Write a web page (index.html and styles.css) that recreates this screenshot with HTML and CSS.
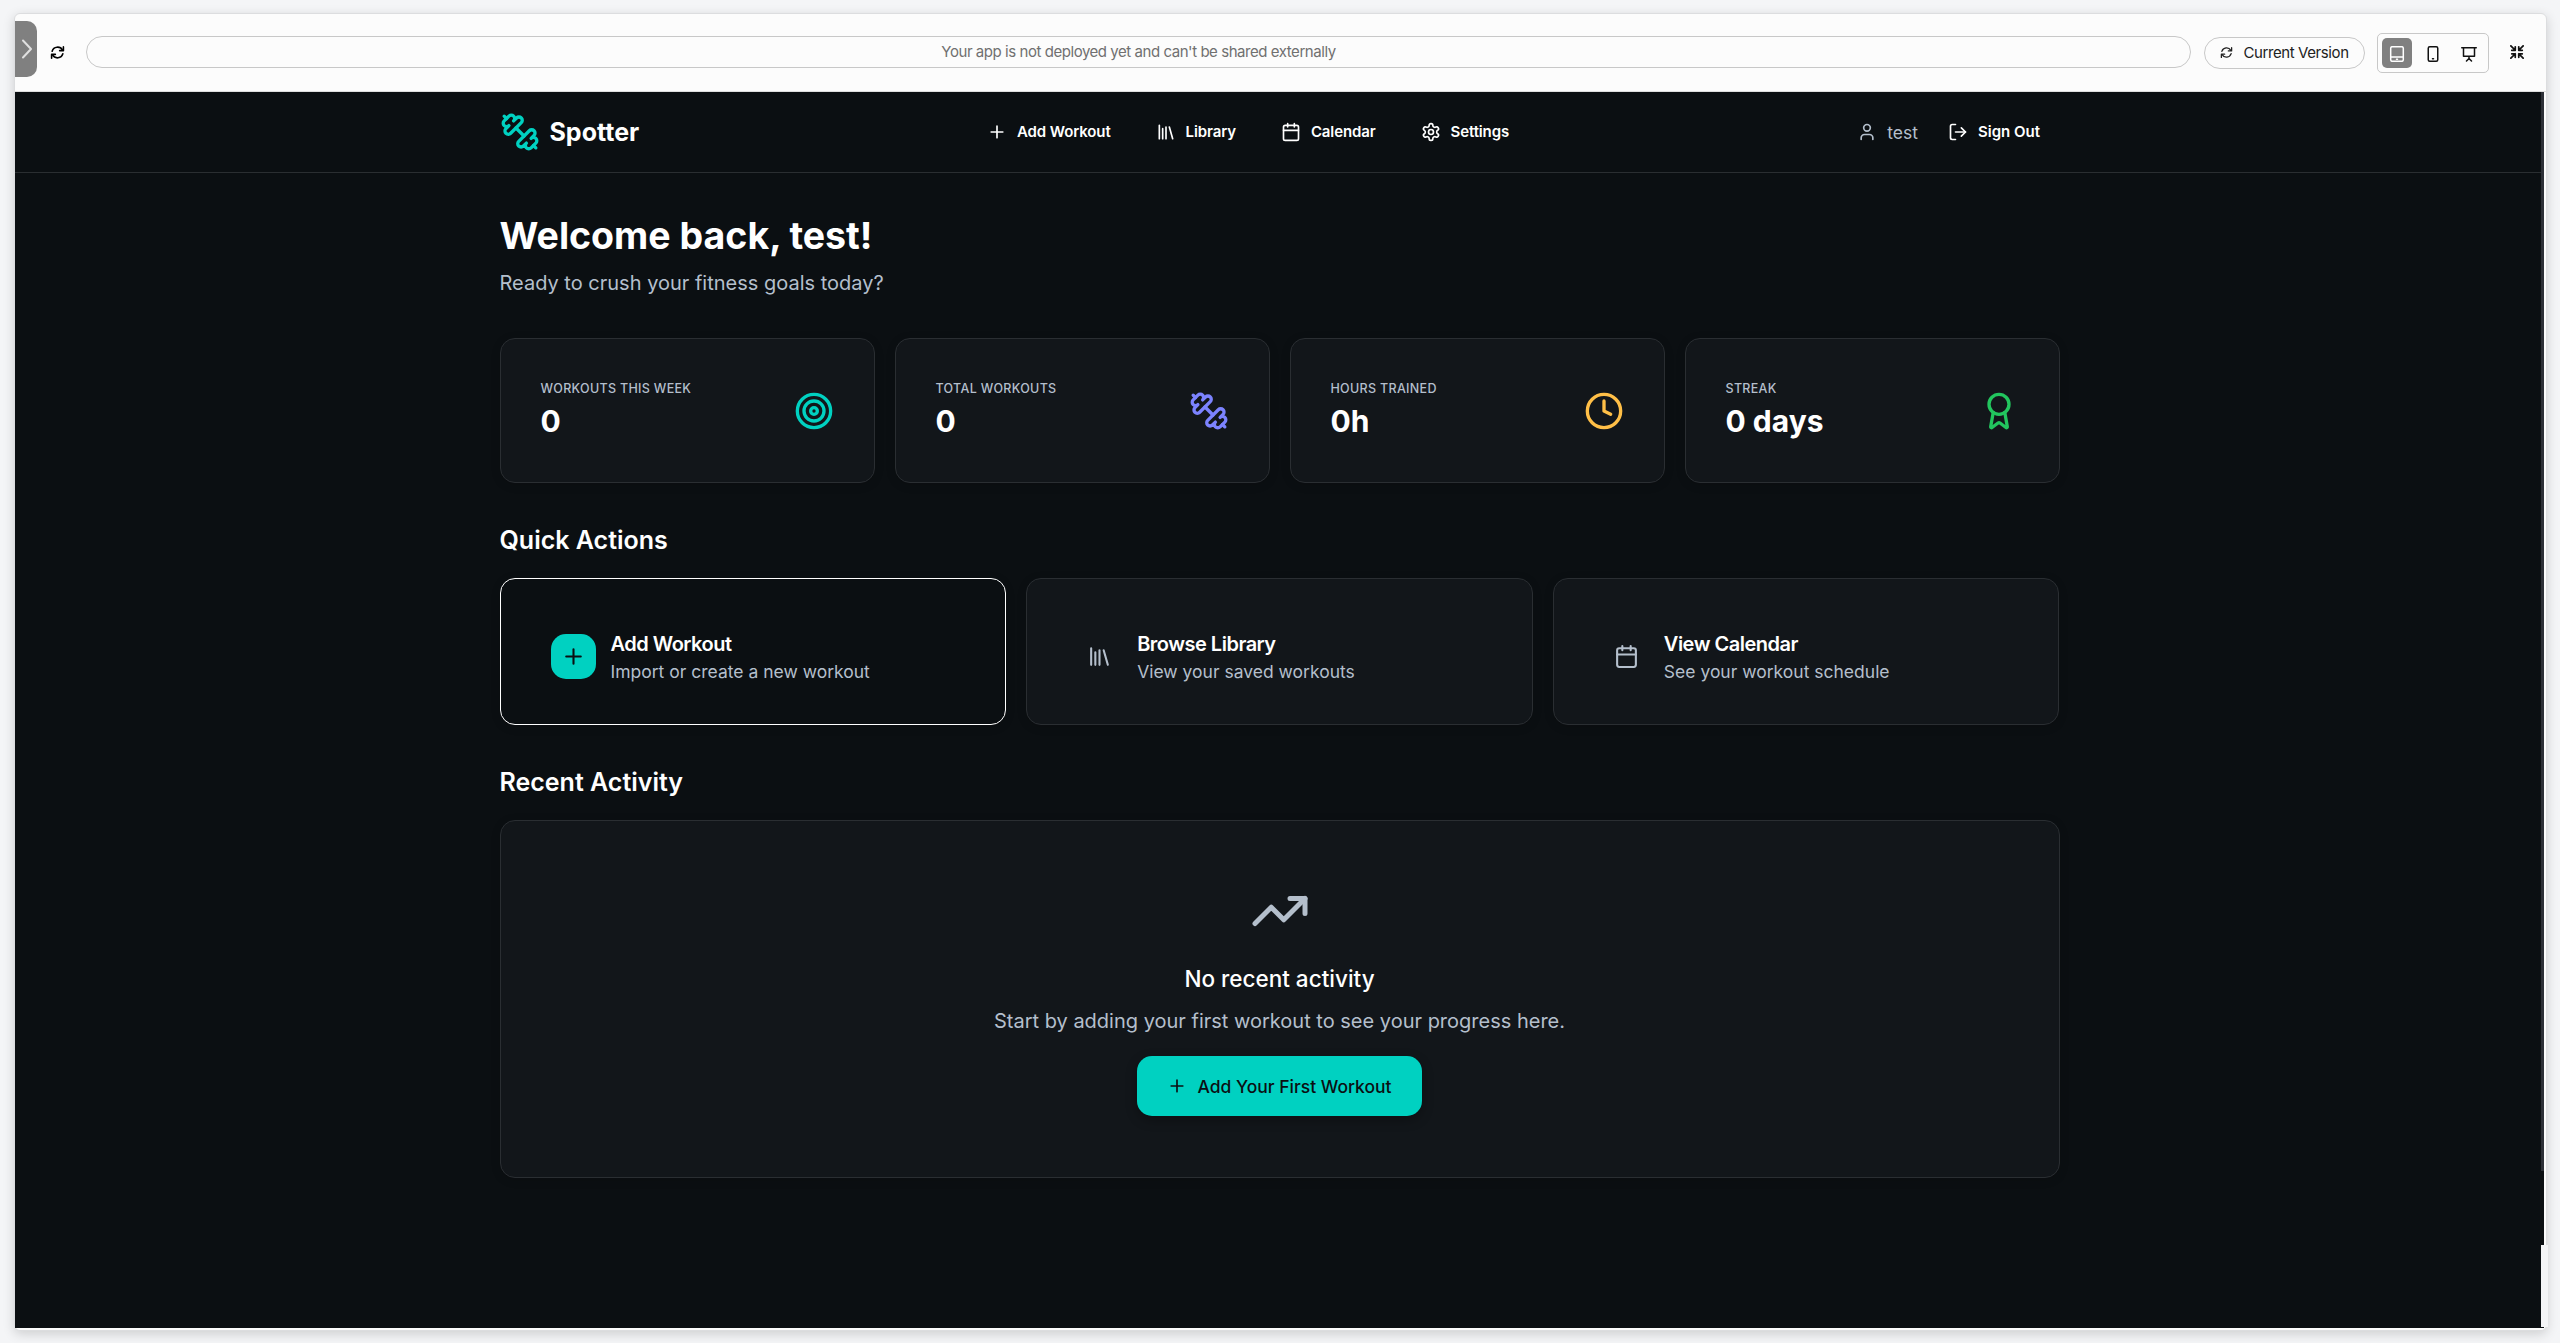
FILE: index.html
```html
<!DOCTYPE html>
<html lang="en">
<head>
<meta charset="utf-8">
<title>Spotter</title>
<link rel="stylesheet" href="styles.css">
</head>
<body>
<svg class="defs" aria-hidden="true">
  <symbol id="dumbbell" viewBox="0 0 24 24"><path d="M14.4 14.4 9.6 9.6"/><path d="M18.657 21.485a2 2 0 1 1-2.829-2.828l-1.767 1.768a2 2 0 1 1-2.829-2.829l6.364-6.364a2 2 0 1 1 2.829 2.829l-1.768 1.767a2 2 0 1 1 2.828 2.829z"/><path d="m21.5 21.5-1.4-1.4"/><path d="M3.9 3.9 2.5 2.5"/><path d="M6.404 12.768a2 2 0 1 1-2.829-2.829l1.768-1.767a2 2 0 1 1-2.828-2.829l2.828-2.828a2 2 0 1 1 2.829 2.828l1.767-1.768a2 2 0 1 1 2.829 2.829z"/></symbol>
  <symbol id="plus" viewBox="0 0 24 24"><path d="M5 12h14M12 5v14"/></symbol>
  <symbol id="library" viewBox="0 0 24 24"><path d="m16 6 4 14M12 6v14M8 8v12M4 4v16"/></symbol>
  <symbol id="calendar" viewBox="0 0 24 24"><path d="M8 2v4M16 2v4"/><rect width="18" height="18" x="3" y="4" rx="2"/><path d="M3 10h18"/></symbol>
  <symbol id="settings" viewBox="0 0 24 24"><path d="M12.22 2h-.44a2 2 0 0 0-2 2v.18a2 2 0 0 1-1 1.73l-.43.25a2 2 0 0 1-2 0l-.15-.08a2 2 0 0 0-2.73.73l-.22.38a2 2 0 0 0 .73 2.73l.15.1a2 2 0 0 1 1 1.72v.51a2 2 0 0 1-1 1.74l-.15.09a2 2 0 0 0-.73 2.73l.22.38a2 2 0 0 0 2.73.73l.15-.08a2 2 0 0 1 2 0l.43.25a2 2 0 0 1 1 1.73V20a2 2 0 0 0 2 2h.44a2 2 0 0 0 2-2v-.18a2 2 0 0 1 1-1.73l.43-.25a2 2 0 0 1 2 0l.15.08a2 2 0 0 0 2.73-.73l.22-.39a2 2 0 0 0-.73-2.73l-.15-.08a2 2 0 0 1-1-1.74v-.5a2 2 0 0 1 1-1.74l.15-.09a2 2 0 0 0 .73-2.73l-.22-.38a2 2 0 0 0-2.73-.73l-.15.08a2 2 0 0 1-2 0l-.43-.25a2 2 0 0 1-1-1.73V4a2 2 0 0 0-2-2z"/><circle cx="12" cy="12" r="3"/></symbol>
  <symbol id="user" viewBox="0 0 24 24"><path d="M19 21v-2a4 4 0 0 0-4-4H9a4 4 0 0 0-4 4v2"/><circle cx="12" cy="7" r="4"/></symbol>
  <symbol id="logout" viewBox="0 0 24 24"><path d="M9 21H5a2 2 0 0 1-2-2V5a2 2 0 0 1 2-2h4"/><path d="m16 17 5-5-5-5"/><path d="M21 12H9"/></symbol>
  <symbol id="target" viewBox="0 0 24 24"><circle cx="12" cy="12" r="10"/><circle cx="12" cy="12" r="6"/><circle cx="12" cy="12" r="2"/></symbol>
  <symbol id="clock" viewBox="0 0 24 24"><circle cx="12" cy="12" r="10"/><path d="M12 6v6l4 2"/></symbol>
  <symbol id="award" viewBox="0 0 24 24"><path d="m15.477 12.89 1.515 8.526a.5.5 0 0 1-.81.47l-3.58-2.687a1 1 0 0 0-1.197 0l-3.586 2.686a.5.5 0 0 1-.81-.469l1.514-8.526"/><circle cx="12" cy="8" r="6"/></symbol>
  <symbol id="trend" viewBox="0 0 24 24"><path d="m22 7-8.500 8.500-5-5L2 17"/><path d="M16 7h6v6"/></symbol>
  <symbol id="sync" viewBox="0 0 16 16"><path d="M2.300 6.600A6 6 0 0 1 13.300 5.400M13.700 9.400A6 6 0 0 1 2.700 10.600"/><path d="M14.300 2v4h-4M1.700 14V10h4"/></symbol>
</svg>
<div class="window">
  <header class="toolbar">
    <div class="handle"><svg viewBox="0 0 12 20"><path d="m2 1.500 8 8.500-8 8.500"/></svg></div>
    <svg class="icon reload"><use href="#sync"/></svg>
    <div class="address">Your app is not deployed yet and can't be shared externally</div>
    <div class="version"><svg class="icon"><use href="#sync"/></svg>Current Version</div>
    <div class="devices">
      <span class="device active"><svg viewBox="0 0 16 16"><rect x="1.700" y=".700" width="12.600" height="14.600" rx="1.500"/><path d="M2 11h12M7.500 13.300h1"/></svg></span>
      <span class="device"><svg viewBox="0 0 16 16"><rect x="3.250" y=".750" width="9.500" height="14.500" rx="1.500"/><path d="M7.500 12.800h1"/></svg></span>
      <span class="device"><svg viewBox="0 0 16 16"><path d="M.750 1.750h14.500M2.500 1.750v8.500h11v-8.500M8 10.250v2.500M5.500 15 8 12.500l2.500 2.500"/></svg></span>
    </div>
    <svg class="collapse" viewBox="0 0 16 16"><path d="M1 1l5 5M6 2v4H2M15 1l-5 5M10 2v4h4M1 15l5-5M2 10h4v4M15 15l-5-5M14 10h-4v4"/></svg>
  </header>
  <div class="app">
    <nav class="nav">
      <div class="container nav-row">
        <div class="brand"><svg class="icon"><use href="#dumbbell"/></svg>Spotter</div>
        <div class="links">
          <a><svg class="icon"><use href="#plus"/></svg>Add Workout</a>
          <a><svg class="icon"><use href="#library"/></svg>Library</a>
          <a><svg class="icon"><use href="#calendar"/></svg>Calendar</a>
          <a><svg class="icon"><use href="#settings"/></svg>Settings</a>
        </div>
        <div class="account">
          <span class="user"><svg class="icon"><use href="#user"/></svg>test</span>
          <a><svg class="icon"><use href="#logout"/></svg>Sign Out</a>
        </div>
      </div>
    </nav>
    <main class="container">
      <h1>Welcome back, test!</h1>
      <p class="lead">Ready to crush your fitness goals today?</p>
      <section class="stats">
        <div class="card stat"><div><div class="label">Workouts this week</div><div class="value">0</div></div><svg class="icon teal"><use href="#target"/></svg></div>
        <div class="card stat"><div><div class="label">Total workouts</div><div class="value">0</div></div><svg class="icon violet"><use href="#dumbbell"/></svg></div>
        <div class="card stat"><div><div class="label">Hours trained</div><div class="value">0h</div></div><svg class="icon amber"><use href="#clock"/></svg></div>
        <div class="card stat"><div><div class="label">Streak</div><div class="value">0 days</div></div><svg class="icon green"><use href="#award"/></svg></div>
      </section>
      <h2>Quick Actions</h2>
      <section class="actions">
        <div class="card action primary"><span class="tile"><svg class="icon"><use href="#plus"/></svg></span><div class="copy"><h3>Add Workout</h3><p>Import or create a new workout</p></div></div>
        <div class="card action"><span class="tile"><svg class="icon"><use href="#library"/></svg></span><div class="copy"><h3>Browse Library</h3><p>View your saved workouts</p></div></div>
        <div class="card action"><span class="tile"><svg class="icon"><use href="#calendar"/></svg></span><div class="copy"><h3>View Calendar</h3><p>See your workout schedule</p></div></div>
      </section>
      <h2>Recent Activity</h2>
      <section class="card empty">
        <svg class="icon"><use href="#trend"/></svg>
        <h3>No recent activity</h3>
        <p>Start by adding your first workout to see your progress here.</p>
        <div class="cta"><svg class="icon"><use href="#plus"/></svg>Add Your First Workout</div>
      </section>
    </main>
    <div class="scrollbar"></div>
    <div class="corner"></div>
  </div>
</div>
</body>
</html>
```
FILE: styles.css
```css
* { box-sizing: border-box; }
body { margin: 0; height: 1343px; overflow: hidden; padding: 13px 13px 0 14px; background: #f4f5f7; font-family: Inter, sans-serif; color: #fff; }
h1, h2, h3, p { margin: 0; }
.defs { position: absolute; width: 0; height: 0; }
svg { fill: none; stroke: currentColor; stroke-width: 2; stroke-linecap: round; stroke-linejoin: round; flex: none; display: block; }

.window { height: 1318px; border: 1px solid #dcdddf; border-radius: 6px; background: #fcfcfc; box-shadow: 0 3px 12px rgba(0, 0, 0, .16); }
.toolbar { height: 78px; display: flex; align-items: center; color: #222; border-bottom: 1px solid #dedede; padding-bottom: 1px; }
.handle { align-self: flex-start; margin-top: 7px; width: 22px; height: 56px; padding-left: 2px; border-radius: 0 10px 10px 0; background: #808080; color: #e0e0e0; display: flex; align-items: center; justify-content: center; }
.handle svg { width: 12px; height: 20px; stroke-width: 2; }
.reload { width: 15px; height: 15px; margin-left: 13px; color: #000; stroke-width: 1.700; }
.address { margin-left: 21px; width: 2105px; height: 32px; padding-bottom: 1px; border: 1px solid #c8c8c8; border-radius: 16px; display: flex; align-items: center; justify-content: center; font-size: 15px; letter-spacing: -.450px; color: #707070; }
.version { margin: 2px 0 0 13px; width: 161px; height: 32px; padding-bottom: 1px; border: 1px solid #c8c8c8; border-radius: 16px; display: flex; align-items: center; justify-content: center; gap: 10px; font-size: 15px; letter-spacing: -.400px; }
.version .icon { width: 13px; height: 13px; stroke-width: 1.600; }
.devices { margin: 2px 0 0 12px; width: 112px; height: 40px; border: 1px solid #c8c8c8; border-radius: 5px; display: flex; align-items: center; justify-content: space-between; padding: 0 4px; }
.device { width: 30px; height: 30px; padding-top: 2px; border-radius: 5px; display: flex; align-items: center; justify-content: center; color: #111; }
.device svg { width: 16px; height: 16px; stroke-width: 1.500; }
.device.active { background: #808080; color: #fff; }
.collapse { width: 14px; height: 14px; margin-left: 21px; color: #111; }

.app { position: relative; height: 1236px; background: #0b0f12; margin-right: 2px; }
.scrollbar { position: absolute; right: 0; top: 0; width: 3px; height: 1079px; background: #2d3037; }
.corner { position: absolute; right: -4px; bottom: 1px; width: 7px; height: 82px; background: #f4f5f7; }
.container { width: 1560px; margin-left: 484.500px; }
.nav { height: 81px; border-bottom: 1px solid #2a2e31; }
.nav-row { height: 80px; display: flex; align-items: center; }
.brand { display: flex; align-items: center; gap: 10px; width: 487.500px; font-size: 25px; font-weight: 700; }
.brand .icon { width: 40px; height: 40px; color: #00d1c1; }
.links, .account { display: flex; align-items: center; font-size: 15px; font-weight: 600; }
.links { gap: 45px; letter-spacing: -.120px; }
.links a, .account a { display: flex; align-items: center; gap: 10px; padding-bottom: 1px; }
.links .icon, .account .icon { width: 20px; height: 20px; }
.account { margin-left: auto; margin-right: 19.500px; gap: 30px; }
.user { display: flex; align-items: center; gap: 10px; font-size: 17.500px; font-weight: 400; color: #b4bfcc; }

h1 { padding-top: 40px; font-size: 37.500px; line-height: 45px; font-weight: 700; }
.lead { margin-top: 10px; font-size: 20px; line-height: 30px; color: #b4bfcc; }
.card { background: #12161a; border: 1px solid #2a2e32; border-radius: 15px; box-shadow: 0 2px 10px rgba(0, 0, 0, .15); }
.stats { margin-top: 40px; display: grid; grid-template-columns: repeat(4, 1fr); gap: 20px; }
.stat { height: 145px; padding: 0 40px; display: flex; align-items: center; justify-content: space-between; }
.label { padding-top: 2px; font-size: 12.500px; line-height: 20px; font-weight: 500; letter-spacing: .310px; text-transform: uppercase; color: #b4bfcc; }
.value { font-size: 30px; line-height: 45px; font-weight: 700; }
.stat .icon { width: 40px; height: 40px; }
.teal { color: #00d1c1; }
.violet { color: #7c83ff; }
.amber { color: #ffbf47; }
.green { color: #22c55e; }
h2 { margin-top: 40px; margin-bottom: 20px; font-size: 25px; line-height: 35px; font-weight: 600; }
.actions { display: grid; grid-template-columns: repeat(3, 1fr); gap: 20px; }
.action { height: 147px; padding: 10px 50px 0; display: flex; align-items: center; gap: 15px; }
.tile { width: 45px; height: 45px; border-radius: 15px; display: flex; align-items: center; justify-content: center; color: #b4bfcc; }
.tile .icon { width: 25px; height: 25px; }
.primary { background: #0b0f12; border-color: #fff; }
.primary .tile { background: #00d1c1; color: #0b0f12; }
.copy { padding-top: 3px; }
.action h3 { font-size: 20px; line-height: 28px; font-weight: 600; letter-spacing: -.500px; }
.action p { font-size: 17.500px; line-height: 28px; color: #b4bfcc; }
.empty { height: 358px; display: flex; flex-direction: column; align-items: center; padding-top: 60px; }
.empty > .icon { width: 60px; height: 60px; color: #b4bfcc; }
.empty h3 { margin-top: 20px; font-size: 22.500px; line-height: 35px; font-weight: 500; }
.empty p { margin-top: 10px; font-size: 20px; line-height: 30px; color: #b4bfcc; }
.cta { margin-top: 20px; width: 285px; height: 60px; border-radius: 15px; background: #00d1c1; color: #0b0f12; display: flex; align-items: center; justify-content: center; gap: 10px; font-size: 17.500px; font-weight: 500; box-shadow: 0 4px 12px rgba(0, 0, 0, .3); }
.cta .icon { width: 20px; height: 20px; }
```
